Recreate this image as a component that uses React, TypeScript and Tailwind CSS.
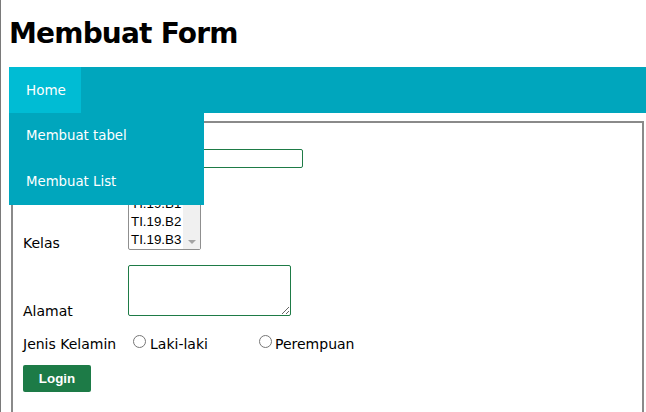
export default function App() {
  const kelas = ["TI.19.A1", "TI.19.B1", "TI.19.B2", "TI.19.B3"];

  return (
    <div className="flex min-h-[412px] bg-white font-['DejaVu_Sans',Verdana,sans-serif] text-black">
      {/* garis tepi jendela */}
      <div className="w-px shrink-0 bg-[#7a7a7a]" />

      <div className="flex-1 pl-[8px]">
        <h1 className="pt-[18px] mb-[17px] text-[28px] leading-[32px] font-bold tracking-[-0.8px]">
          Membuat Form
        </h1>

        {/* navigasi */}
        <nav className="relative z-10 flex h-[46px] bg-[#00a6bd]">
          <div className="flex h-full w-[72px] items-center bg-[#00bcd4] pl-[17px] text-[13.5px] text-white">
            Home
          </div>
          <div className="absolute left-0 top-full w-[195px] bg-[#00a6bd] text-[13.3px] text-white">
            <div className="flex h-[46px] items-center pl-[17px]">Membuat tabel</div>
            <div className="flex h-[46px] items-center pl-[17px]">Membuat List</div>
          </div>
        </nav>

        {/* form */}
        <fieldset className="mx-[2px] mt-[8px] border-2 border-[#8a8a8a] pl-[10px] pt-[25px] pb-[30px] text-[14px]">
          <div className="flex items-end">
            <label className="w-[105px] mb-[-1px]">Nama</label>
            <input
              type="text"
              className="h-[19px] w-[175px] rounded-[2px] border border-[#1e7b46] bg-white px-1 text-[13px] outline-none"
            />
          </div>

          <div className="mt-[8px] flex items-end">
            <label className="w-[105px] mb-[-4px]">Kelas</label>
            <div className="flex h-[74px] w-[73px] rounded-[2px] border border-[#8f8f8f] bg-white">
              <div className="flex-1 pl-[2px] font-['Liberation_Sans',Arial,sans-serif] text-[13.33px]">
                {kelas.map((k) => (
                  <div key={k} className="h-[18px] leading-[18px]">
                    {k}
                  </div>
                ))}
              </div>
              <div className="flex w-[17px] flex-col items-center justify-end bg-[#f0f0f0] pb-[5px]">
                <svg width="8" height="4" viewBox="0 0 8 4">
                  <path d="M0 0h8L4 4z" fill="#a3a3a3" />
                </svg>
              </div>
            </div>
          </div>

          <div className="mt-[15px] flex items-end">
            <label className="w-[105px] mb-[-6px]">Alamat</label>
            <textarea className="h-[51px] w-[163px] resize rounded-[2px] border border-[#1e7b46] bg-white outline-none" />
          </div>

          <div className="mt-[18px] flex items-start">
            <span className="w-[105px]">Jenis Kelamin</span>
            <label className="flex w-[126px] items-start">
              <input type="radio" name="jk" className="ml-[5px] mr-[4px] mt-px h-[13px] w-[13px]" />
              Laki-laki
            </label>
            <label className="flex items-start">
              <input type="radio" name="jk" className="ml-[5px] mr-[3px] mt-px h-[13px] w-[13px]" />
              Perempuan
            </label>
          </div>

          <button className="mt-[10px] h-[27px] w-[68px] rounded-[2px] bg-[#1d7b47] font-['Liberation_Sans',Arial,sans-serif] text-[13.33px] font-bold text-white">
            Login
          </button>
        </fieldset>
      </div>
    </div>
  );
}
